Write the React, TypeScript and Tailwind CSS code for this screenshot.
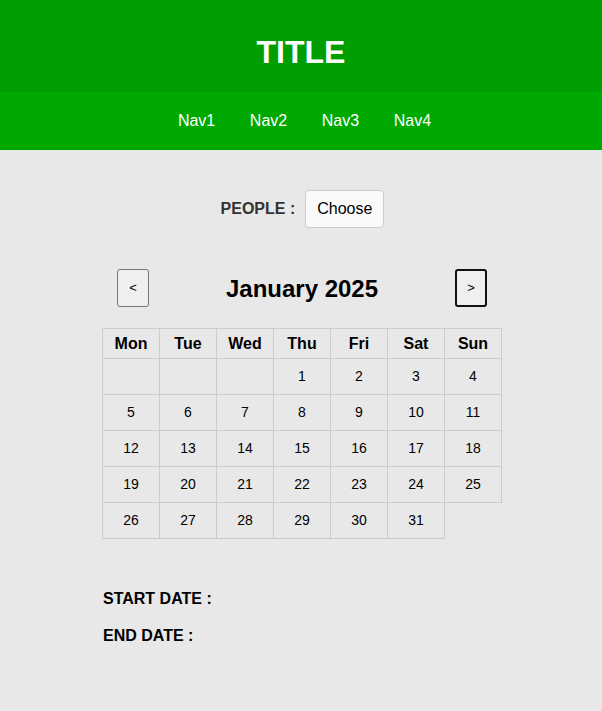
const DAYS = ['Mon', 'Tue', 'Wed', 'Thu', 'Fri', 'Sat', 'Sun'];

const WEEKS: (number | null)[][] = [
  [null, null, null, 1, 2, 3, 4],
  [5, 6, 7, 8, 9, 10, 11],
  [12, 13, 14, 15, 16, 17, 18],
  [19, 20, 21, 22, 23, 24, 25],
  [26, 27, 28, 29, 30, 31],
];

function App() {
  return (
    <div className="min-h-screen bg-[#e8e8e8] font-['Liberation_Sans',Arial,sans-serif] text-black">
      <header className="flex h-[92px] items-center justify-center bg-[#009e00] pt-[12px]">
        <h1 className="text-[32px] font-bold text-white">TITLE</h1>
      </header>
      <nav className="flex h-[58px] items-center justify-center bg-[#00a900] pl-[7px]">
        {['Nav1', 'Nav2', 'Nav3', 'Nav4'].map((n) => (
          <a key={n} className="px-[17.3px] text-[16px] text-white">
            {n}
          </a>
        ))}
      </nav>

      <div className="mt-[40px] flex items-center justify-center pl-[3px]">
        <span className="mr-[10px] text-[16px] font-bold text-[#333]">PEOPLE :</span>
        <button
          type="button"
          className="h-[38px] rounded-[4px] border border-[#ccc] bg-[#fafafa] px-[11px] text-[16px]"
        >
          Choose
        </button>
      </div>

      <div className="ml-[102px] mt-[41px] w-[400px]">
        <div className="flex items-center justify-between px-[15px]">
          <button
            type="button"
            className="h-[38px] w-[32px] rounded-[3px] border border-[#767676] bg-[#efefef] text-[13px]"
          >
            &lt;
          </button>
          <h2 className="pt-[2px] text-[24px] font-bold">January 2025</h2>
          <button
            type="button"
            className="h-[38px] w-[32px] rounded-[3px] border-2 border-[#111] bg-[#efefef] text-[13px]"
          >
            &gt;
          </button>
        </div>

        <table className="mt-[21px] border-collapse">
          <thead>
            <tr>
              {DAYS.map((d) => (
                <th key={d} className="h-[30px] w-[57px] border border-[#ccc] p-0 text-center text-[16px] font-bold">
                  {d}
                </th>
              ))}
            </tr>
          </thead>
          <tbody>
            {WEEKS.map((week, i) => (
              <tr key={i}>
                {week.map((day, j) => (
                  <td key={j} className="h-[36px] w-[57px] border border-[#ccc] p-0 text-center text-[14px]">
                    {day ?? ''}
                  </td>
                ))}
              </tr>
            ))}
          </tbody>
        </table>

        <div className="mt-[51px] pl-[1px]">
          <p className="text-[16px] font-bold leading-[18px]">START DATE :</p>
          <p className="mt-[19px] text-[16px] font-bold leading-[18px]">END DATE :</p>
        </div>
      </div>
    </div>
  );
}

export default App;
